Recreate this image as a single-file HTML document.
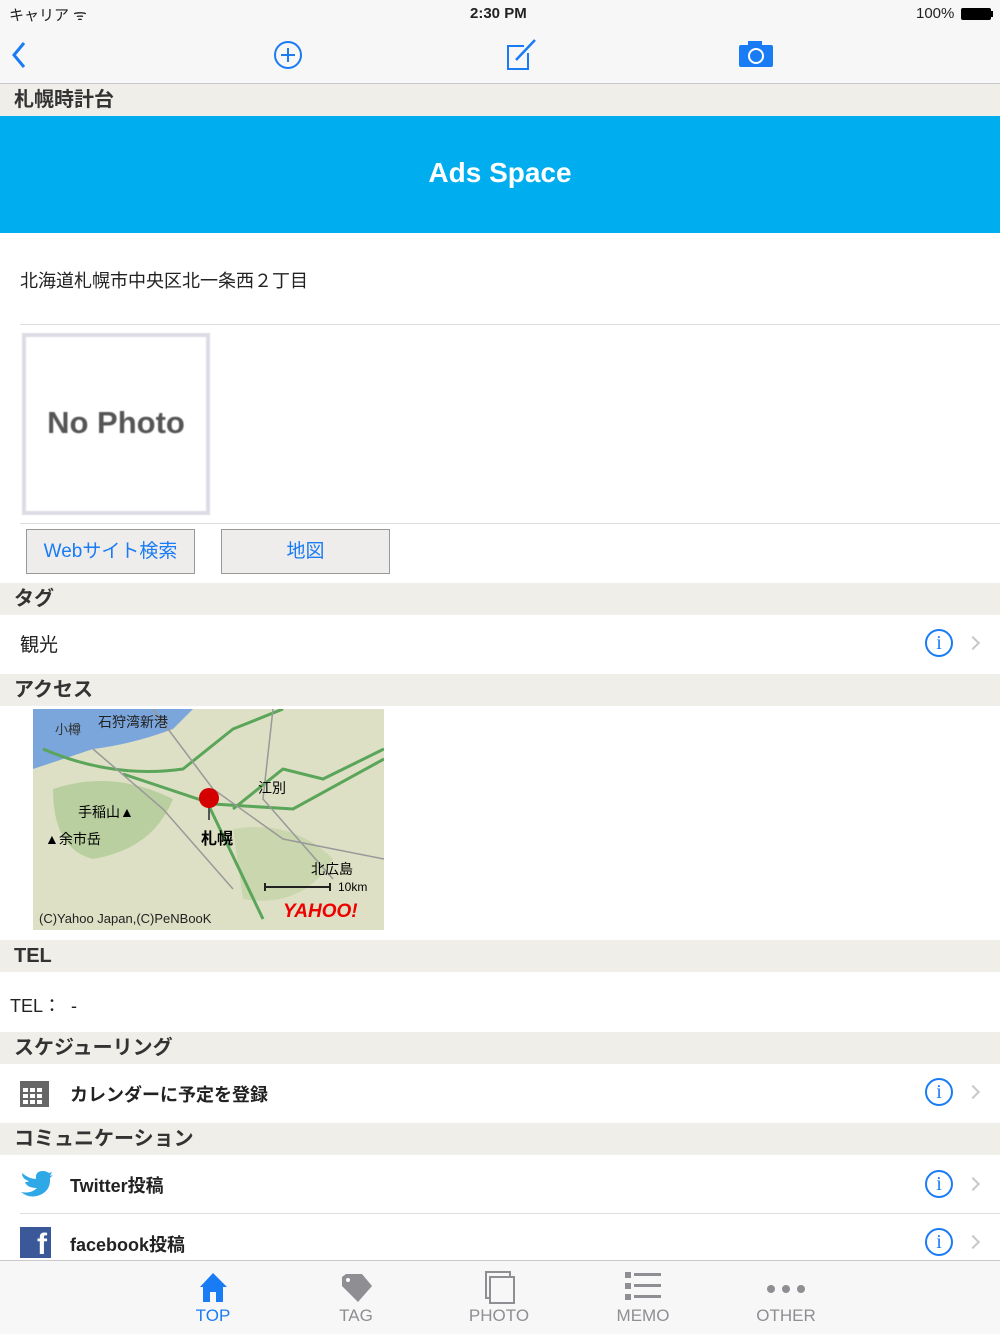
<!DOCTYPE html>
<html><head><meta charset="utf-8"><style>
*{margin:0;padding:0;box-sizing:border-box}
body{width:1000px;height:1334px;overflow:hidden;background:#fff;font-family:"Liberation Sans","Noto Sans CJK JP",sans-serif;position:relative;color:#222}
.abs{position:absolute}
.hdr{position:absolute;left:0;width:1000px;height:32px;background:#efeee9;font-weight:bold;font-size:20px;line-height:32px;padding-left:14px;color:#333}
.row{position:absolute;left:0;width:1000px;font-size:19px;color:#222}
.info{position:absolute;right:47px;width:28px;height:28px;border:2px solid #1a7cf5;border-radius:50%;color:#1a7cf5;font-family:"Liberation Serif",serif;font-size:20px;text-align:center;line-height:24px}
.chev{position:absolute;right:22px;width:10px;height:10px;border-right:2px solid #c7c7cc;border-top:2px solid #c7c7cc;transform:rotate(45deg)}
.btn{position:absolute;top:529px;height:45px;width:169px;background:#eeedeb;border:1px solid #999;color:#1a7cf5;font-size:19px;text-align:center;line-height:43px}
.tab{position:absolute;top:1306px;font-size:17px;color:#8e8e93;width:120px;text-align:center}
</style></head><body>
<div class="abs" style="left:0;top:0;width:1000px;height:84px;background:#f7f7f7;border-bottom:1px solid #c8c7cc"></div>
<div class="abs" style="left:9px;top:4px;font-size:15px">キャリア ᯤ</div>
<div class="abs" style="left:470px;top:5px;font-size:15px;font-weight:bold">2:30 PM</div>
<div class="abs" style="left:916px;top:5px;font-size:15px">100%</div>
<div class="abs" style="left:961px;top:8px;width:30px;height:12px;background:#000;border-radius:2px"></div>
<div class="abs" style="left:991px;top:11px;width:2px;height:6px;background:#000"></div>
<svg class="abs" style="left:0;top:30px" width="1000" height="50">
<path d="M24 13 L14 25 L24 37" fill="none" stroke="#1a7cf5" stroke-width="3"/>
<circle cx="288" cy="25" r="13" fill="none" stroke="#1a7cf5" stroke-width="2"/>
<path d="M288 18v14M281 25h14" stroke="#1a7cf5" stroke-width="2"/>
<path d="M524 16h-16v23h20v-16" fill="none" stroke="#1a7cf5" stroke-width="2"/>
<path d="M516 30 L535 10" stroke="#1a7cf5" stroke-width="2.5"/>
<rect x="739" y="15" width="34" height="22" rx="2" fill="#1a7cf5"/><rect x="748" y="11" width="14" height="6" fill="#1a7cf5"/>
<circle cx="756" cy="26" r="7" fill="none" stroke="#fff" stroke-width="2"/>
</svg>
<div class="hdr" style="top:84px">札幌時計台</div>
<div class="abs" style="left:0;top:116px;width:1000px;height:117px;background:#00aeef;color:#fff;font-weight:bold;font-size:28px;text-align:center;line-height:114px">Ads Space</div>
<div class="abs" style="left:20px;top:267px;font-size:18px">北海道札幌市中央区北一条西２丁目</div>
<div class="abs" style="left:20px;top:324px;width:980px;height:1px;background:#ddd"></div>
<div class="abs" style="left:22px;top:333px;width:188px;height:182px;border:4px solid #dcdce6;background:#fff;font-size:31px;font-weight:bold;color:#555;text-align:center;line-height:172px;filter:blur(0.6px)">No Photo</div>
<div class="abs" style="left:20px;top:523px;width:980px;height:1px;background:#ddd"></div>
<div class="btn" style="left:26px">Webサイト検索</div>
<div class="btn" style="left:221px">地図</div>
<div class="hdr" style="top:583px">タグ</div>
<div class="row" style="top:630px;left:20px">観光</div>
<div class="info" style="top:629px">i</div><div class="chev" style="top:638px"></div>
<div class="hdr" style="top:674px">アクセス</div>
<svg class="abs" style="left:33px;top:709px" width="351" height="221">
<rect width="351" height="221" fill="#dde0c4"/>
<path d="M0 0h160 L140 20 Q100 35 60 40 Q30 50 0 60z" fill="#7ba6dc"/>
<path d="M20 80 Q80 60 140 90 Q120 140 60 150 Q20 140 20 80z" fill="#b9cfa0"/>
<path d="M200 120 Q260 110 300 150 Q270 200 210 190z" fill="#c9d6ae"/>
<path d="M10 40 Q80 70 150 60 L200 20 L250 0 M90 65 L180 95 L260 100 L351 50 M175 95 L230 210 M200 100 L250 60 L290 70 L351 40" fill="none" stroke="#5aa55a" stroke-width="3"/>
<path d="M120 0 L180 80 L250 130 L351 150 M60 40 L130 100 L200 180 M240 0 L230 90 L300 170" fill="none" stroke="#999" stroke-width="1.5"/>
<text x="65" y="18" font-size="14" fill="#222">石狩湾新港</text>
<text x="22" y="25" font-size="13" fill="#333">小樽</text>
<text x="225" y="84" font-size="14">江別</text>
<text x="45" y="108" font-size="14">手稲山▲</text>
<text x="12" y="135" font-size="14">▲余市岳</text>
<text x="168" y="135" font-size="16" font-weight="bold">札幌</text>
<text x="278" y="165" font-size="14">北広島</text>
<text x="305" y="182" font-size="12">10km</text>
<path d="M232 178h65M232 174v8M297 174v8" stroke="#222" stroke-width="2"/>
<circle cx="176" cy="89" r="10" fill="#d40000"/><path d="M176 99v12" stroke="#555" stroke-width="2"/>
<text x="250" y="208" font-size="19" font-weight="bold" fill="#e00" font-style="italic">YAHOO!</text>
<text x="6" y="214" font-size="13" fill="#222">(C)Yahoo Japan,(C)PeNBooK</text>
</svg>
<div class="hdr" style="top:940px">TEL</div>
<div class="row" style="top:992px;left:10px;font-size:18px">TEL：&nbsp; -</div>
<div class="hdr" style="top:1032px">スケジューリング</div>
<svg class="abs" style="left:19px;top:1077px" width="32" height="31"><rect x="1" y="4" width="29" height="26" fill="#666"/><g fill="#fff"><rect x="4" y="11" width="5" height="4"/><rect x="11" y="11" width="5" height="4"/><rect x="18" y="11" width="5" height="4"/><rect x="4" y="17" width="5" height="4"/><rect x="11" y="17" width="5" height="4"/><rect x="18" y="17" width="5" height="4"/><rect x="4" y="23" width="5" height="4"/><rect x="11" y="23" width="5" height="4"/><rect x="18" y="23" width="5" height="4"/></g></svg>
<div class="row" style="top:1081px;left:70px;font-weight:bold;font-size:18px">カレンダーに予定を登録</div>
<div class="info" style="top:1078px">i</div><div class="chev" style="top:1087px"></div>
<div class="hdr" style="top:1123px">コミュニケーション</div>
<svg class="abs" style="left:19px;top:1170px" width="34" height="28"><path d="M2 22 Q12 24 18 18 Q8 18 6 12 Q9 12 10 11 Q3 9 3 3 Q10 9 17 9 Q16 1 24 1 Q27 1 30 3 L33 2 L31 6 L34 5 L31 8 Q32 22 18 26 Q9 28 2 22z" fill="#2fa8e8"/></svg>
<div class="row" style="top:1172px;left:70px;font-weight:bold;font-size:18px">Twitter投稿</div>
<div class="info" style="top:1170px">i</div><div class="chev" style="top:1179px"></div>
<div class="abs" style="left:20px;top:1213px;width:980px;height:1px;background:#ddd"></div>
<div class="abs" style="left:20px;top:1227px;width:31px;height:31px;background:#3b5998;color:#fff;font-weight:bold;font-size:30px;text-align:right;padding-right:4px;line-height:36px;overflow:hidden">f</div>
<div class="row" style="top:1231px;left:70px;font-weight:bold;font-size:18px">facebook投稿</div>
<div class="info" style="top:1228px">i</div><div class="chev" style="top:1237px"></div>
<div class="abs" style="left:0;top:1260px;width:1000px;height:74px;background:rgba(247,247,247,0.97);border-top:1px solid #c8c7cc"></div>
<svg class="abs" style="left:0;top:1270px" width="1000" height="36">
<path d="M213 3 L200 17 L203 17 L203 32 L210 32 L210 22 L216 22 L216 32 L223 32 L223 17 L227 17z" fill="#1a7cf5"/>
<path d="M346 4 L362 4 L372 16 L358 32 L342 16 L342 7z" fill="#8e8e93"/><circle cx="348" cy="10" r="2" fill="#fff"/>
<rect x="486" y="2" width="24" height="26" fill="none" stroke="#8e8e93" stroke-width="2"/><rect x="490" y="7" width="24" height="26" fill="#f7f7f7" stroke="#8e8e93" stroke-width="2"/>
<g fill="#8e8e93"><rect x="625" y="2" width="6" height="6"/><rect x="634" y="3" width="27" height="3"/><rect x="625" y="13" width="6" height="6"/><rect x="634" y="14" width="27" height="3"/><rect x="625" y="24" width="6" height="6"/><rect x="634" y="25" width="27" height="3"/>
<circle cx="771" cy="19" r="4"/><circle cx="786" cy="19" r="4"/><circle cx="801" cy="19" r="4"/></g>
</svg>
<div class="tab" style="left:153px;color:#1a7cf5">TOP</div>
<div class="tab" style="left:296px">TAG</div>
<div class="tab" style="left:439px">PHOTO</div>
<div class="tab" style="left:583px">MEMO</div>
<div class="tab" style="left:726px">OTHER</div>
</body></html>
